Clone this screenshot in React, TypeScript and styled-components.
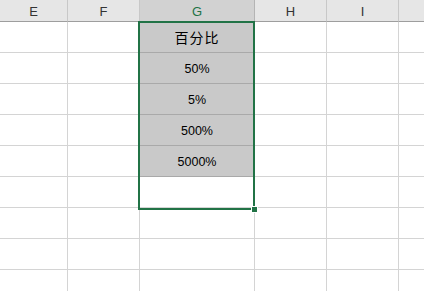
import React from "react";
import styled, { createGlobalStyle } from "styled-components";

const GlobalStyle = createGlobalStyle`
  html, body {
    margin: 0;
    padding: 0;
    background: #fff;
    overflow: hidden;
  }
  body {
    font-family: "Liberation Sans", "Noto Sans CJK SC", sans-serif;
  }
`;

// the last column is only partly in view, so its letter is off screen
const columns = [
  { name: "E", width: 68 },
  { name: "F", width: 72 },
  { name: "G", width: 115, selected: true },
  { name: "H", width: 72 },
  { name: "I", width: 72 },
  { name: "", width: 26 },
];

const values = ["百分比", "50%", "5%", "500%", "5000%"];
const ROWS = 9;

const Sheet = styled.div`
  position: relative;
  width: 424px;
  height: 291px;
  overflow: hidden;
`;

const Grid = styled.div`
  display: grid;
  grid-template-columns: ${columns.map((c) => `${c.width}px`).join(" ")};
  grid-template-rows: 22px repeat(${ROWS}, 31px);
`;

const HeaderCell = styled.div<{ $selected?: boolean }>`
  display: flex;
  align-items: center;
  justify-content: center;
  box-sizing: border-box;
  background: ${(p) => (p.$selected ? "#d2d2d2" : "#e6e6e6")};
  border-right: 1px solid ${(p) => (p.$selected ? "#b4b4b4" : "#c8c8c8")};
  border-bottom: 1px solid ${(p) => (p.$selected ? "#217346" : "#9e9e9e")};
  color: ${(p) => (p.$selected ? "#217346" : "#333")};
  font-size: 13px;
  padding-top: 1px;
`;

const Cell = styled.div<{ $filled?: boolean }>`
  display: flex;
  align-items: center;
  justify-content: center;
  box-sizing: border-box;
  padding-top: 2px;
  background: ${(p) => (p.$filled ? "#c9c9c9" : "#fff")};
  border-right: 1px solid #d4d4d4;
  border-bottom: 1px solid ${(p) => (p.$filled ? "#a9a9a9" : "#d4d4d4")};
  color: #000;
  font-size: 12.5px;
`;

const Title = styled.span`
  font-size: 14px;
  letter-spacing: 1px;
  margin-top: -2px;
`;

const Selection = styled.div`
  position: absolute;
  left: 138px;
  top: 21px;
  width: 117px;
  height: 189px;
  box-sizing: border-box;
  border: 2px solid #217346;
  pointer-events: none;
`;

const Handle = styled.div`
  position: absolute;
  right: -5px;
  bottom: -5px;
  width: 5px;
  height: 5px;
  background: #217346;
  border: 1px solid #fff;
`;

export default function App() {
  const rows = Array.from({ length: ROWS }, (_, r) => r);
  return (
    <Sheet>
      <GlobalStyle />
      <Grid>
        {columns.map((c, i) => (
          <HeaderCell key={i} $selected={c.selected}>
            {c.name}
          </HeaderCell>
        ))}
        {rows.map((r) =>
          columns.map((c, i) => {
            const v = c.selected ? values[r] : undefined;
            return (
              <Cell key={`${i}-${r}`} $filled={v !== undefined}>
                {r === 0 && v ? <Title>{v}</Title> : v}
              </Cell>
            );
          })
        )}
      </Grid>
      <Selection>
        <Handle />
      </Selection>
    </Sheet>
  );
}
